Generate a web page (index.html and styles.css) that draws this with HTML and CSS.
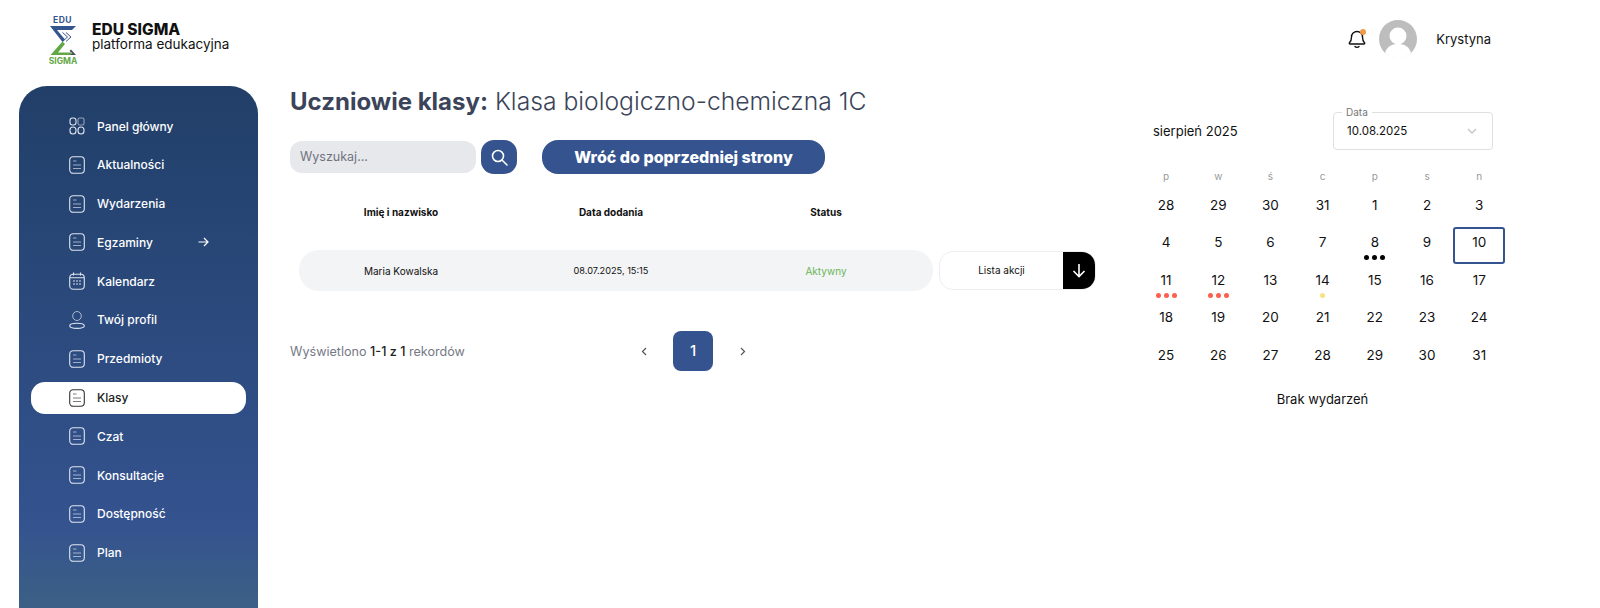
FILE: index.html
```html
<!doctype html>
<html lang="pl">

	<head>
		<title>EDU SIGMA</title>
		<meta charset="utf-8" />
		<link rel="stylesheet" href="styles.css">
	</head>

	<body>

		<svg class="defs" width="0" height="0">
			<symbol id="doc" viewBox="0 0 16 18">
				<rect x="0.7" y="0.7" width="14.6" height="16.6" rx="3.5" fill="none" stroke="currentColor" stroke-width="1.1" />
				<path d="M4 5h3.5M4 9h8M4 12.5h8" fill="none" stroke="currentColor" stroke-width="1" opacity="0.65" />
			</symbol>
		</svg>

		<header class="top">
			<div class="brand">
				<svg class="logo" width="32" height="52" viewBox="0 0 32 52">
					<text x="13.500" y="10" class="logo-edu">EDU</text>
					<path d="M1 13h26l-4 4H8l8 9.500-2.500 2.500z" fill="#35558f" />
					<path d="M13.500 19.500l5 4.500-5 4.500M17 19.500l5 4.500-5 4.500" fill="none" stroke="#35558f" stroke-width="1" />
					<path d="M1.500 42l12-13.500 2.500 2.500-7 8.500h13V42z" fill="#62a845" />
					<path d="M21.500 42H27l-5-5.500-1.500 1.500 3 2.500h-2z" fill="#44505f" />
					<text x="14" y="51" class="logo-sigma">SIGMA</text>
				</svg>
				<div class="brand-text">
					<div class="brand-name">EDU SIGMA</div>
					<div class="brand-sub">platforma edukacyjna</div>
				</div>
			</div>
			<div class="user">
				<span class="bell">
					<svg width="18" height="20" viewBox="0 0 18 20">
						<path d="M3.500 8a5.500 5.500 0 0 1 11 0c0 3 .7 4.500 2 5.800.5.600.1 1.200-.6 1.200H2.100c-.7 0-1.100-.6-.6-1.200C2.800 12.500 3.500 11 3.500 8z" fill="none" stroke="#111" stroke-width="1.4" />
						<path d="M7 17.500c1 1.200 3 1.200 4 0" fill="none" stroke="#111" stroke-width="1.400" stroke-linecap="round" />
					</svg>
					<i class="bell-dot"></i>
				</span>
				<svg class="avatar" width="38" height="38" viewBox="0 0 38 38">
					<circle cx="19" cy="19" r="19" fill="#bdbdbd" />
					<circle cx="19" cy="16" r="8.500" fill="#fff" />
					<path d="M6 33c2-7 7-9 13-9s11 2 13 9a19 19 0 0 1-26 0z" fill="#fff" />
				</svg>
				<span class="user-name">Krystyna</span>
			</div>
		</header>

		<div class="page">

			<nav class="side">
				<a class="side-item" href="#">
					<svg class="side-icon" width="16" height="18" viewBox="0 0 16 18">
						<g fill="none" stroke="currentColor" stroke-width="1.100">
							<rect x="1" y="1" width="6" height="7" rx="2.500" />
							<rect x="9" y="1" width="6" height="7" rx="1.500" opacity="0.6" />
							<rect x="1" y="10" width="6" height="7" rx="3" />
							<rect x="9" y="10" width="6" height="7" rx="3" />
						</g>
					</svg>
					<span>Panel główny</span>
				</a>
				<a class="side-item" href="#"><svg class="side-icon" width="16" height="18"><use href="#doc" /></svg><span>Aktualności</span></a>
				<a class="side-item" href="#"><svg class="side-icon" width="16" height="18"><use href="#doc" /></svg><span>Wydarzenia</span></a>
				<a class="side-item" href="#">
					<svg class="side-icon" width="16" height="18"><use href="#doc" /></svg>
					<span class="side-label">Egzaminy</span>
					<svg width="11" height="10" viewBox="0 0 11 10"><path d="M0.500 5h9.500M6 1l4 4-4 4" fill="none" stroke="#fff" stroke-width="1.200" /></svg>
				</a>
				<a class="side-item" href="#">
					<svg class="side-icon" width="16" height="18" viewBox="0 0 16 18">
						<rect x="0.700" y="2.200" width="14.600" height="15" rx="3.500" fill="none" stroke="currentColor" stroke-width="1.100" />
						<path d="M4.500 0.500v3M11.500 0.500v3M1 5.800h14" fill="none" stroke="currentColor" stroke-width="1.100" />
						<path d="M4 9h2M7 9h2M10 9h2M4 12h2M7 12h2M10 12h2" fill="none" stroke="currentColor" stroke-width="1.300" opacity="0.65" />
					</svg>
					<span>Kalendarz</span>
				</a>
				<a class="side-item" href="#">
					<svg class="side-icon" width="16" height="18" viewBox="0 0 16 18">
						<ellipse cx="8" cy="5" rx="4.300" ry="4.500" fill="none" stroke="currentColor" stroke-width="1" opacity="0.7" />
						<ellipse cx="8" cy="14.800" rx="7.300" ry="2.600" fill="none" stroke="currentColor" stroke-width="1.100" />
					</svg>
					<span>Twój profil</span>
				</a>
				<a class="side-item" href="#"><svg class="side-icon" width="16" height="18"><use href="#doc" /></svg><span>Przedmioty</span></a>
				<a class="side-item active" href="#"><svg class="side-icon" width="16" height="18"><use href="#doc" /></svg><span>Klasy</span></a>
				<a class="side-item" href="#"><svg class="side-icon" width="16" height="18"><use href="#doc" /></svg><span>Czat</span></a>
				<a class="side-item" href="#"><svg class="side-icon" width="16" height="18"><use href="#doc" /></svg><span>Konsultacje</span></a>
				<a class="side-item" href="#"><svg class="side-icon" width="16" height="18"><use href="#doc" /></svg><span>Dostępność</span></a>
				<a class="side-item" href="#"><svg class="side-icon" width="16" height="18"><use href="#doc" /></svg><span>Plan</span></a>
			</nav>

			<main class="main">
				<h1 class="title"><b>Uczniowie klasy:</b> Klasa biologiczno-chemiczna 1C</h1>

				<div class="tools">
					<div class="search">Wyszukaj...</div>
					<button class="search-btn">
						<svg width="17" height="17" viewBox="0 0 17 17"><circle cx="7" cy="7" r="5.500" fill="none" stroke="#fff" stroke-width="1.600" /><path d="M11 11l5 5" stroke="#fff" stroke-width="1.600" stroke-linecap="round" /></svg>
					</button>
					<button class="back-btn">Wróć do poprzedniej strony</button>
				</div>

				<div class="cols head">
					<div>Imię i nazwisko</div>
					<div>Data dodania</div>
					<div>Status</div>
				</div>

				<div class="line">
					<div class="cols row">
						<div>Maria Kowalska</div>
						<div class="date">08.07.2025, 15:15</div>
						<div class="ok">Aktywny</div>
					</div>
					<div class="actions">
						<span class="actions-text">Lista akcji</span>
						<span class="actions-btn">
							<svg width="14" height="15" viewBox="0 0 14 15"><path d="M7 1v12.500M1.500 8L7 13.500 12.500 8" fill="none" stroke="#fff" stroke-width="1.600" /></svg>
						</span>
					</div>
				</div>

				<div class="foot">
					<div class="count">Wyświetlono <b>1-1 z 1</b> rekordów</div>
					<div class="pages">
						<span class="arrow"><svg width="7" height="9" viewBox="0 0 7 9"><path d="M5 1L1.500 4.500 5 8" fill="none" stroke="#555" stroke-width="1.200" /></svg></span>
						<span class="page-no">1</span>
						<span class="arrow"><svg width="7" height="9" viewBox="0 0 7 9"><path d="M2 1l3.500 3.500L2 8" fill="none" stroke="#555" stroke-width="1.200" /></svg></span>
					</div>
				</div>
			</main>

			<aside class="cal">
				<div class="cal-top">
					<div class="month">sierpień 2025</div>
					<div class="field">
						<span class="field-label">Data</span>
						<span>10.08.2025</span>
						<svg width="10" height="6" viewBox="0 0 10 6"><path d="M1 1l4 4 4-4" fill="none" stroke="#c4c4c4" stroke-width="1.300" /></svg>
					</div>
				</div>

				<div class="week">
					<span>p</span><span>w</span><span>ś</span><span>c</span><span>p</span><span>s</span><span>n</span>
				</div>

				<div class="days">
					<div class="day">28</div><div class="day">29</div><div class="day">30</div><div class="day">31</div><div class="day">1</div><div class="day">2</div><div class="day">3</div>
					<div class="day">4</div><div class="day">5</div><div class="day">6</div><div class="day">7</div>
					<div class="day">8<div class="dots"><i class="black"></i><i class="black"></i><i class="black"></i></div></div>
					<div class="day">9</div><div class="day selected">10</div>
					<div class="day">11<div class="dots"><i class="red"></i><i class="red"></i><i class="red"></i></div></div>
					<div class="day">12<div class="dots"><i class="red"></i><i class="red"></i><i class="red"></i></div></div>
					<div class="day">13</div>
					<div class="day">14<div class="dots"><i class="yellow"></i></div></div>
					<div class="day">15</div><div class="day">16</div><div class="day">17</div>
					<div class="day">18</div><div class="day">19</div><div class="day">20</div><div class="day">21</div><div class="day">22</div><div class="day">23</div><div class="day">24</div>
					<div class="day">25</div><div class="day">26</div><div class="day">27</div><div class="day">28</div><div class="day">29</div><div class="day">30</div><div class="day">31</div>
				</div>

				<p class="empty">Brak wydarzeń</p>
			</aside>

		</div>

	</body>

</html>
```

FILE: styles.css
```css
* {
	box-sizing: border-box;
}

body {
	margin: 0;
	height: 608px;
	overflow: hidden;
	background: #fff;
	color: #111;
	font-family: "Inter", "Liberation Sans", sans-serif;
}

.defs {
	position: absolute;
}

/* top bar */
.top {
	display: flex;
	justify-content: space-between;
	align-items: center;
	height: 86px;
	padding: 0 109px 8px 49px;
}

.brand {
	display: flex;
	align-items: center;
	gap: 11px;
}

.brand-text {
	margin-top: -6px;
}

.logo-edu {
	font-size: 8.500px;
	font-weight: 700;
	letter-spacing: 0.5px;
	fill: #35558f;
	text-anchor: middle;
}

.logo-sigma {
	font-size: 8.500px;
	font-weight: 700;
	fill: #62a845;
	text-anchor: middle;
}

.brand-name {
	font-size: 15.500px;
	font-weight: 800;
	line-height: 15px;
}

.brand-sub {
	font-size: 13.500px;
	line-height: 14px;
}

.user {
	display: flex;
	align-items: center;
}

.bell {
	position: relative;
	display: flex;
	margin-right: 13px;
}

.bell-dot {
	position: absolute;
	top: 0;
	right: 0;
	width: 6px;
	height: 6px;
	border-radius: 50%;
	background: #f0994a;
}

.user-name {
	margin-left: 19px;
	font-size: 13px;
}

.page {
	display: flex;
}

/* sidebar */
.side {
	display: flex;
	flex-direction: column;
	gap: 6.8px;
	width: 239px;
	height: 522px;
	margin-left: 19px;
	padding: 24px 12px 0;
	border-radius: 28px 28px 0 0;
	background: linear-gradient(180deg, #213f68 0%, #34538f 84%, #3c6085 100%);
}

.side-item {
	display: flex;
	align-items: center;
	gap: 12px;
	height: 32px;
	padding-left: 38px;
	border-radius: 14px;
	color: #fff;
	font-size: 12px;
	font-weight: 500;
	text-decoration: none;
}

.side-icon {
	color: #dfe5ef;
}

.side-label {
	width: 89px;
}

.side-item.active {
	background: #fff;
	color: #222;
}

.side-item.active .side-icon {
	color: #333;
}

/* main */
.main {
	width: 882px;
	padding-left: 32px;
}

.title {
	margin: 0;
	color: #3b4459;
	font-size: 24.700px;
	font-weight: 300;
	line-height: 30px;
}

.title b {
	font-size: 24px;
	font-weight: 700;
}

.tools {
	display: flex;
	align-items: center;
	margin-top: 23px;
}

.search {
	width: 186px;
	height: 32px;
	padding-left: 10px;
	border-radius: 12px;
	background: #e7e8ec;
	color: #6f7380;
	font-size: 12.5px;
	line-height: 32px;
}

.search-btn {
	display: flex;
	justify-content: center;
	align-items: center;
	width: 36px;
	height: 34px;
	margin-left: 5px;
	padding: 0;
	border: none;
	border-radius: 13px;
	background: #34538f;
}

.back-btn {
	width: 283px;
	height: 34px;
	margin-left: 25px;
	padding: 0;
	border: none;
	border-radius: 16px;
	background: #34538f;
	color: #fff;
	font-family: inherit;
	font-size: 16px;
	font-weight: 800;
}

.cols {
	display: grid;
	grid-template-columns: 204px 216px 214px;
	width: 634px;
	text-align: center;
}

.head {
	margin: 30px 0 30px 9px;
	font-size: 10px;
	font-weight: 700;
	line-height: 16px;
}

.line {
	display: flex;
	align-items: center;
	gap: 6px;
	margin-left: 9px;
}

.row {
	align-items: center;
	height: 41px;
	border-radius: 20px;
	background: #f3f4f6;
	font-size: 10px;
}

.date {
	font-size: 9.200px;
}

.ok {
	color: #6bb45a;
}

.actions {
	display: flex;
	width: 157px;
	height: 39px;
	border: 1px solid #eceef0;
	border-radius: 14px;
	overflow: hidden;
	font-size: 10px;
}

.actions-text {
	flex: 1;
	line-height: 37px;
	text-align: center;
}

.actions-btn {
	display: flex;
	justify-content: center;
	align-items: center;
	width: 32px;
	background: #000;
}

.foot {
	display: flex;
	align-items: center;
	height: 40px;
	margin-top: 40px;
}

.count {
	width: 344px;
	color: #767986;
	font-size: 12.600px;
}

.count b {
	color: #222;
	font-weight: 500;
}

.pages {
	display: flex;
	align-items: center;
	gap: 19px;
}

.arrow {
	display: flex;
	justify-content: center;
	width: 20px;
}

.page-no {
	width: 40px;
	height: 40px;
	border-radius: 8px;
	background: #34538f;
	color: #fff;
	font-size: 15px;
	font-weight: 500;
	line-height: 40px;
	text-align: center;
}

/* calendar */
.cal {
	width: 366px;
	padding-top: 26px;
}

.cal-top {
	display: flex;
	justify-content: space-between;
	align-items: center;
	width: 353px;
	padding-left: 13px;
}

.month {
	font-size: 13px;
}

.field {
	position: relative;
	display: flex;
	justify-content: space-between;
	align-items: center;
	width: 160px;
	height: 38px;
	padding: 0 15px 0 13px;
	border: 1px solid #e0e0e0;
	border-radius: 4px;
	font-size: 11.5px;
}

.field-label {
	position: absolute;
	top: -7px;
	left: 8px;
	padding: 0 4px;
	background: #fff;
	color: #777;
	font-size: 10px;
	line-height: 12px;
}

.week,
.days {
	display: grid;
	grid-template-columns: repeat(7, 52.2px);
	text-align: center;
}

.week {
	height: 20px;
	margin-top: 16px;
	margin-bottom: 4px;
	color: #999;
	font-size: 10px;
	line-height: 20px;
}

.days {
	grid-auto-rows: 37.4px;
	font-size: 13.5px;
}

.day {
	display: flex;
	flex-direction: column;
	align-items: center;
	height: 37px;
	padding-top: 4px;
	line-height: 18px;
	border: 2px solid transparent;
	border-radius: 3px;
}

.day.selected {
	border-color: #34538f;
	border-width: 2.500px;
}

.dots {
	display: flex;
	gap: 3px;
	margin-top: 4px;
}

.dots i {
	width: 5px;
	height: 5px;
	border-radius: 50%;
}

.dots .black {
	background: #000;
}

.dots .red {
	background: #fb5f4d;
}

.dots .yellow {
	background: #f8e184;
}

.empty {
	margin: 12px 0 0;
	width: 365px;
	font-size: 13px;
	line-height: 20px;
	text-align: center;
}
```
